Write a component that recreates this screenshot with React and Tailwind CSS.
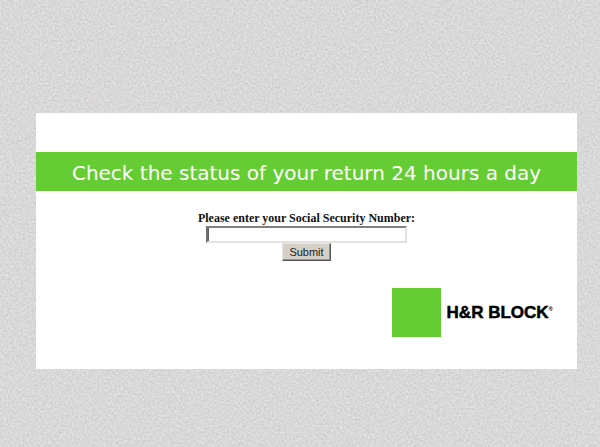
function PaperTexture() {
  return (
    <svg className="absolute inset-0 -z-10 h-full w-full" aria-hidden="true">
      <filter id="grain" x="0" y="0" width="100%" height="100%" colorInterpolationFilters="sRGB">
        <feTurbulence type="fractalNoise" baseFrequency="0.47" numOctaves="2" seed="7" />
        <feColorMatrix
          type="matrix"
          values="0.17 0.02 0 0 0.755
                  0.17 0 0 0 0.76
                  0.17 0 0.02 0 0.755
                  0 0 0 0 1"
        />
      </filter>
      <rect width="100%" height="100%" filter="url(#grain)" />
    </svg>
  );
}

function Logo() {
  return (
    <div className="flex items-center gap-1.5">
      <div className="size-[49px] bg-[#66cc33]" />
      <div className="flex items-start font-['Liberation_Sans',Arial,sans-serif] font-bold text-black">
        <span className="text-[17px] leading-5 [-webkit-text-stroke:0.5px_black]">H&amp;R BLOCK</span>
        <span className="text-[6px] leading-3">®</span>
      </div>
    </div>
  );
}

export default function App() {
  return (
    <div className="relative isolate min-h-screen bg-[#d9d8d9] pt-[113px] pr-[23px] pb-9 pl-9">
      <PaperTexture />
      <main className="bg-white pt-[39px] pb-8">
        <h1 className="flex h-[39px] items-center justify-center bg-[#66cc33] pt-0.5 font-['DejaVu_Sans',Verdana,sans-serif] text-xl whitespace-nowrap text-white">
          Check the status of your return 24 hours a day
        </h1>
        <form
          className="flex flex-col items-center pt-[19px]"
          onSubmit={(event) => event.preventDefault()}
        >
          <label
            htmlFor="ssn"
            className="font-['Liberation_Serif','Times_New_Roman',serif] text-xs leading-4 font-bold text-[#111111]"
          >
            Please enter your Social Security Number:
          </label>
          <input
            id="ssn"
            type="text"
            autoComplete="off"
            className="h-[17px] w-[201px] border-2 border-t-[#808080] border-r-[#e4e2dc] border-b-[#e4e2dc] border-l-[#707070] bg-white px-0.5 font-['Liberation_Sans',Arial,sans-serif] text-[11px] shadow-[inset_1px_0_0_#606060] outline-none"
          />
          <button
            type="submit"
            className="h-[18px] w-[49px] border border-t-[#e8e6e0] border-r-[#555555] border-b-[#555555] border-l-[#e8e6e0] bg-[#d4d0c8] font-['Liberation_Sans',Arial,sans-serif] text-[11px] leading-4 text-[#222222] shadow-[inset_-1px_-1px_0_#969288]"
          >
            Submit
          </button>
        </form>
        <div className="flex justify-end pt-[27px] pr-6">
          <Logo />
        </div>
      </main>
    </div>
  );
}
